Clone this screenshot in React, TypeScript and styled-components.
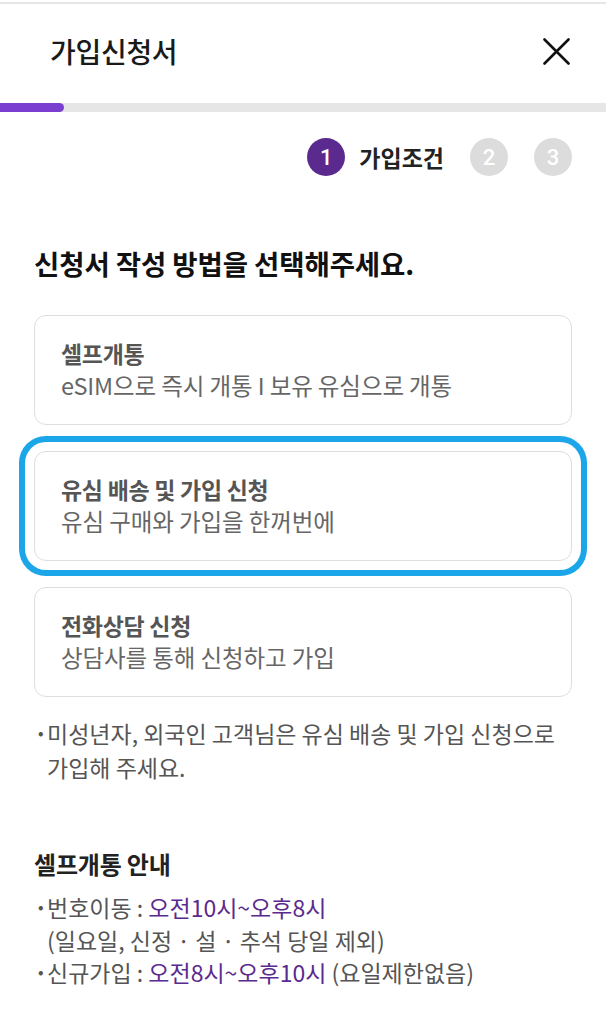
import React from "react";
import styled, { createGlobalStyle } from "styled-components";

const GlobalStyle = createGlobalStyle`
  html, body { margin: 0; padding: 0; background: #fff; }
  body {
    font-family: "Noto Sans CJK KR", "Noto Sans", sans-serif;
    color: #222;
    word-break: keep-all;
    -webkit-font-smoothing: antialiased;
  }
  * { box-sizing: border-box; }
`;

const Page = styled.div`
  width: 606px;
  padding-top: 2px;
  background: #fff;
`;

const Header = styled.header`
  height: 101px;
  border-top: 2px solid #e6e6e6;
  display: flex;
  align-items: center;
  justify-content: space-between;
  padding: 0 36px 5px 50px;
`;

const Title = styled.h1`
  margin: 0;
  font-size: 28px;
  font-weight: 500;
  letter-spacing: -0.3px;
  color: #1a1a1a;
`;

const CloseButton = styled.button`
  border: 0;
  background: none;
  padding: 0;
  width: 28px;
  height: 28px;
  display: flex;
  align-items: center;
  justify-content: center;
  cursor: pointer;
`;

const Track = styled.div`
  height: 9px;
  background: #e6e6e6;
  display: flex;
`;

const Fill = styled.div`
  height: 100%;
  background: #7a3fd0;
  border-radius: 0 5px 5px 0;
`;

const Steps = styled.div`
  display: flex;
  justify-content: flex-end;
  align-items: center;
  padding: 26px 34px 0 0;
`;

const Circle = styled.span<{ $active?: boolean }>`
  width: 38px;
  height: 38px;
  border-radius: 50%;
  background: ${(p) => (p.$active ? "#5b2a8e" : "#dcdcdc")};
  color: #fff;
  font-family: "Roboto", "Noto Sans", sans-serif;
  font-size: 22px;
  font-weight: 500;
  display: flex;
  align-items: center;
  justify-content: center;
  margin-left: ${(p) => (p.$active ? "0" : "26px")};
`;

const StepLabel = styled.span`
  margin-left: 14px;
  font-size: 23px;
  font-weight: 700;
  color: #222;
`;

const Content = styled.main`
  padding: 0 34px;
`;

const Heading = styled.h2`
  margin: 68px 0 33px;
  font-size: 27.5px;
  font-weight: 700;
  letter-spacing: -0.1px;
  line-height: 38px;
  color: #111;
`;

const CardList = styled.div`
  display: flex;
  flex-direction: column;
  gap: 26px;
`;

const Card = styled.div<{ $focused?: boolean }>`
  height: 110px;
  border: 1.5px solid #dedede;
  border-radius: 12px;
  padding: 20px 26px 22px;
  display: flex;
  flex-direction: column;
  justify-content: center;
  background: #fff;
  box-shadow: ${(p) =>
    p.$focused ? "0 0 0 9px #fff, 0 0 0 15px #1ba6ea" : "none"};
`;

const CardTitle = styled.div`
  font-size: 23px;
  font-weight: 700;
  color: #555;
  line-height: 31px;
  letter-spacing: -0.3px;
`;

const CardSub = styled.div`
  font-size: 23.5px;
  font-weight: 400;
  color: #666;
  line-height: 32px;
  letter-spacing: -0.1px;
`;

const Note = styled.p`
  margin: 19px 0 0;
  padding-left: 13px;
  position: relative;
  font-size: 23px;
  line-height: 34px;
  color: #555;
  letter-spacing: 0;
  &::before {
    content: "·";
    position: absolute;
    left: 0;
    top: 0;
    font-weight: 700;
  }
`;

const InfoTitle = styled.h3`
  margin: 64px 0 11px;
  font-size: 24px;
  font-weight: 700;
  line-height: 32px;
  color: #222;
  letter-spacing: -0.2px;
`;

const InfoLine = styled.div<{ $bullet?: boolean }>`
  position: relative;
  padding-left: 13px;
  font-size: 23px;
  line-height: 32.5px;
  color: #555;
  letter-spacing: 0;
  &::before {
    content: ${(p) => (p.$bullet ? '"·"' : '""')};
    position: absolute;
    left: 0;
    top: 0;
    font-weight: 700;
  }
`;

const Time = styled.span`
  color: #5b2a8e;
`;

export default function App() {
  return (
    <Page>
      <GlobalStyle />
      <Header>
        <Title>가입신청서</Title>
        <CloseButton aria-label="닫기">
          <svg width="27" height="27" viewBox="0 0 27 27">
            <path
              d="M1.5 1.5 L25.5 25.5 M25.5 1.5 L1.5 25.5"
              stroke="#111"
              strokeWidth="2.6"
              strokeLinecap="round"
            />
          </svg>
        </CloseButton>
      </Header>
      <Track>
        <Fill style={{ width: "64px" }} />
      </Track>
      <Steps>
        <Circle $active>1</Circle>
        <StepLabel>가입조건</StepLabel>
        <Circle>2</Circle>
        <Circle>3</Circle>
      </Steps>
      <Content>
        <Heading>신청서 작성 방법을 선택해주세요.</Heading>
        <CardList>
          <Card>
            <CardTitle>셀프개통</CardTitle>
            <CardSub>eSIM으로 즉시 개통 I 보유 유심으로 개통</CardSub>
          </Card>
          <Card $focused>
            <CardTitle>유심 배송 및 가입 신청</CardTitle>
            <CardSub>유심 구매와 가입을 한꺼번에</CardSub>
          </Card>
          <Card>
            <CardTitle>전화상담 신청</CardTitle>
            <CardSub>상담사를 통해 신청하고 가입</CardSub>
          </Card>
        </CardList>
        <Note>
          미성년자, 외국인 고객님은 유심 배송 및 가입 신청으로 가입해 주세요.
        </Note>
        <InfoTitle>셀프개통 안내</InfoTitle>
        <InfoLine $bullet>
          번호이동 : <Time>오전10시~오후8시</Time>
        </InfoLine>
        <InfoLine>(일요일, 신정 · 설 · 추석 당일 제외)</InfoLine>
        <InfoLine $bullet>
          신규가입 : <Time>오전8시~오후10시</Time> (요일제한없음)
        </InfoLine>
      </Content>
    </Page>
  );
}
